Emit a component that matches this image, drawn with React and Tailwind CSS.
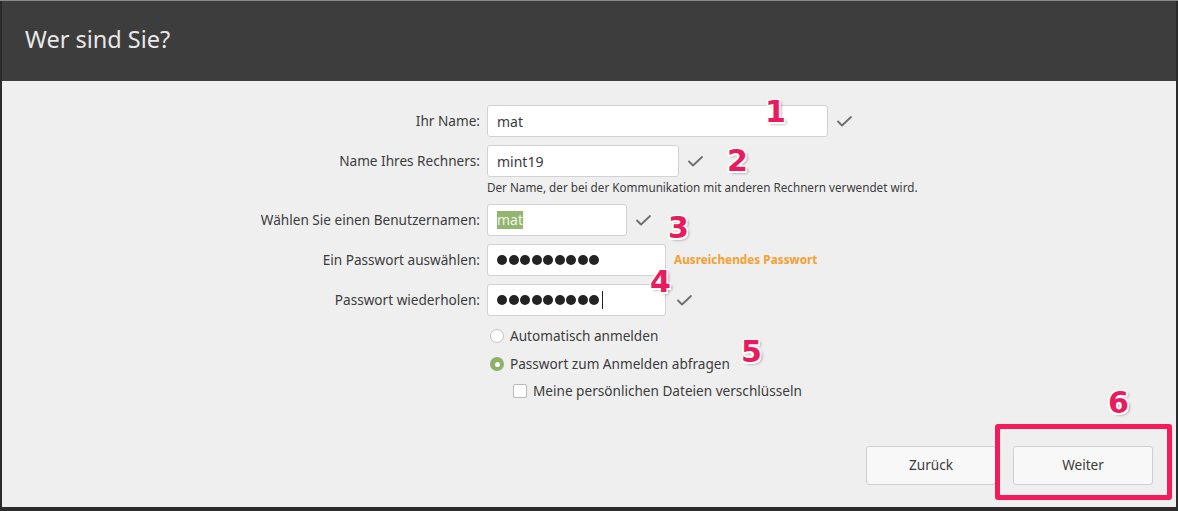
import React from "react";

const font = { fontFamily: '"Noto Sans", "Open Sans", sans-serif' };

function Check() {
  return (
    <svg width="15" height="11" viewBox="0 0 15 11" className="shrink-0">
      <path d="M1 5.5 L5 9.5 L14 1" fill="none" stroke="#6e6e6e" strokeWidth="1.8" strokeLinecap="round" strokeLinejoin="round" />
    </svg>
  );
}

function Dots({ caret }) {
  return (
    <div className="flex items-center gap-[1.5px]">
      {[0, 1, 2, 3, 4, 5, 6, 7, 8].map((i) => (
        <div key={i} className="w-[10px] h-[10px] rounded-full bg-[#232323]" />
      ))}
      {caret && <div className="w-px h-[18px] bg-[#222] ml-[1px]" />}
    </div>
  );
}

function Num({ children, className }) {
  return (
    <div
      className={"absolute font-bold text-[30px] leading-none text-[#ea1a5e] [text-shadow:-1.5px_-1.5px_0_#fff,1.5px_-1.5px_0_#fff,-1.5px_1.5px_0_#fff,1.5px_1.5px_0_#fff,0_0_2px_#fff,2px_2px_3px_rgba(0,0,0,0.45)] " + className}
      style={{ fontFamily: '"DejaVu Sans", Verdana, sans-serif' }}
    >
      {children}
    </div>
  );
}

function Row({ label, children, className = "" }) {
  return (
    <div className={"flex items-center " + className}>
      <div className="w-[485px] pr-[7px] text-right text-[13.6px] text-[#3c3c3c]">{label}</div>
      {children}
    </div>
  );
}

const inputCls = "h-[32px] bg-white border border-[#d2d2d2] rounded-[3px] flex items-center pl-[9px] text-[14px] text-[#3a3a3a] shrink-0";

export default function App() {
  return (
    <div className="relative w-[1178px] h-[511px] bg-[#2b2b2b] flex flex-col px-[2px] pb-[4px]" style={font}>
      <div className="h-px bg-[#8a8a8a] -mx-[2px]" />
      <div className="h-[80px] bg-[#3d3d3d] flex items-center pl-[23px] pb-[2px]">
        <span className="text-[23.5px] text-[#e8e8e8]">Wer sind Sie?</span>
      </div>
      <div className="flex-1 bg-[#efefef] flex flex-col pt-[24px]">
        <Row label="Ihr Name:">
          <div className={inputCls + " w-[341px]"}>mat</div>
          <div className="ml-[9px]"><Check /></div>
        </Row>
        <Row label="Name Ihres Rechners:" className="mt-[8px]">
          <div className={inputCls + " w-[192px]"}>mint19</div>
          <div className="ml-[9px]"><Check /></div>
        </Row>
        <div className="pl-[485px] mt-[3px] h-[16px] flex items-center text-[11.7px] text-[#3c3c3c] whitespace-nowrap">
          Der Name, der bei der Kommunikation mit anderen Rechnern verwendet wird.
        </div>
        <Row label="Wählen Sie einen Benutzernamen:" className="mt-[8px]">
          <div className={inputCls + " w-[140px]"}>
            <span className="bg-[#93b56f] text-[#eef4e6] leading-[18px]">mat</span>
          </div>
          <div className="ml-[9px]"><Check /></div>
        </Row>
        <Row label="Ein Passwort auswählen:" className="mt-[8px]">
          <div className={inputCls + " w-[179px]"}><Dots /></div>
          <div className="ml-[8px] text-[11.8px] font-bold text-[#f5a030] whitespace-nowrap">Ausreichendes Passwort</div>
        </Row>
        <Row label="Passwort wiederholen:" className="mt-[8px]">
          <div className={inputCls + " w-[179px] border-[#c5d0ab]"}><Dots caret /></div>
          <div className="ml-[11px]"><Check /></div>
        </Row>
        <div className="pl-[488px] mt-[10px] h-[20px] flex items-center gap-[6px] text-[13.6px] text-[#3c3c3c]">
          <div className="w-[14px] h-[14px] rounded-full bg-white border border-[#c4c4c4]" />
          <span>Automatisch anmelden</span>
        </div>
        <div className="pl-[488px] mt-[8px] h-[20px] flex items-center gap-[6px] text-[13.6px] text-[#3c3c3c]">
          <div className="w-[14px] h-[14px] rounded-full bg-[#8fb06b] flex items-center justify-center">
            <div className="w-[5px] h-[5px] rounded-full bg-white" />
          </div>
          <span>Passwort zum Anmelden abfragen</span>
        </div>
        <div className="pl-[511px] mt-[7px] h-[20px] flex items-center gap-[6px] text-[13.6px] text-[#3c3c3c]">
          <div className="w-[14px] h-[14px] rounded-[2px] bg-white border border-[#b8b8b8]" />
          <span>Meine persönlichen Dateien verschlüsseln</span>
        </div>
        <div className="flex-1" />
        <div className="flex justify-end gap-[17px] pr-[23px] pb-[22px]">
          <button className="w-[130px] h-[39px] bg-[#f8f8f8] border border-[#cfcfcf] rounded-[3px] text-[13.6px] text-[#3c3c3c]">Zurück</button>
          <button className="w-[140px] h-[39px] bg-[#f8f8f8] border border-[#cfcfcf] rounded-[3px] text-[13.6px] text-[#3c3c3c]">Weiter</button>
        </div>
      </div>

      <div className="absolute left-[995px] top-[424px] w-[177px] h-[76px] border-[5px] border-[#f41a5c] rounded-[3px]" />
      <Num className="left-[765px] top-[97px]">1</Num>
      <Num className="left-[727px] top-[146px]">2</Num>
      <Num className="left-[668px] top-[213px]">3</Num>
      <Num className="left-[650px] top-[267px]">4</Num>
      <Num className="left-[741px] top-[337px]">5</Num>
      <Num className="left-[1108px] top-[388px]">6</Num>
    </div>
  );
}
